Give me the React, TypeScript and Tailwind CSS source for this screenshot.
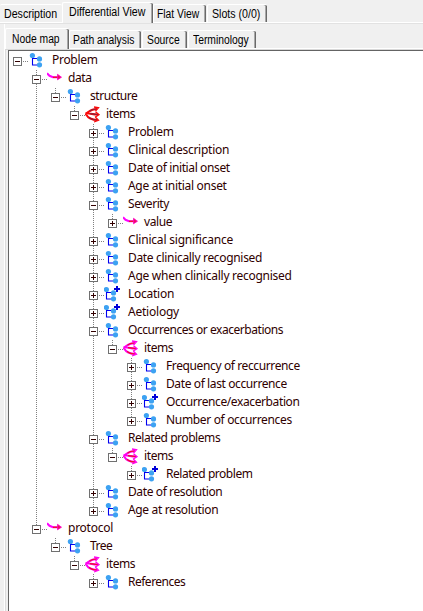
import React from "react";

type Kind = "cluster" | "clusterPlus" | "arrow" | "fan" | "fanRed";
type Row = [level: number, label: string, kind: Kind, open: boolean, tracking: number];

const rows: Row[] = [
  [0, "Problem", "cluster", true, -0.3],
  [1, "data", "arrow", true, -0.4],
  [2, "structure", "cluster", true, -0.45],
  [3, "items", "fanRed", true, -0.4],
  [4, "Problem", "cluster", false, -0.3],
  [4, "Clinical description", "cluster", false, -0.25],
  [4, "Date of initial onset", "cluster", false, -0.38],
  [4, "Age at initial onset", "cluster", false, -0.3],
  [4, "Severity", "cluster", true, -0.45],
  [5, "value", "arrow", false, -0.4],
  [4, "Clinical significance", "cluster", false, -0.2],
  [4, "Date clinically recognised", "cluster", false, -0.32],
  [4, "Age when clinically recognised", "cluster", false, -0.27],
  [4, "Location", "clusterPlus", false, -0.25],
  [4, "Aetiology", "clusterPlus", false, -0.22],
  [4, "Occurrences or exacerbations", "cluster", true, -0.46],
  [5, "items", "fan", true, -0.4],
  [6, "Frequency of reccurrence", "cluster", false, -0.38],
  [6, "Date of last occurrence", "cluster", false, -0.39],
  [6, "Occurrence/exacerbation", "clusterPlus", false, -0.39],
  [6, "Number of occurrences", "cluster", false, -0.33],
  [4, "Related problems", "cluster", true, -0.44],
  [5, "items", "fan", true, -0.4],
  [6, "Related problem", "clusterPlus", false, -0.47],
  [4, "Date of resolution", "cluster", false, -0.39],
  [4, "Age at resolution", "cluster", false, -0.35],
  [1, "protocol", "arrow", true, -0.25],
  [2, "Tree", "cluster", true, -0.5],
  [3, "items", "fan", true, -0.4],
  [4, "References", "cluster", false, -0.5],
];

function continues(index: number, level: number) {
  for (let i = index + 1; i < rows.length; i++) {
    if (rows[i][0] < level) return false;
    if (rows[i][0] === level) return true;
  }
  return false;
}

function Guide({ on }: { on: boolean }) {
  return (
    <svg className="h-[18px] w-[19px] shrink-0" shapeRendering="crispEdges">
      {on && <path d="M8.5 0V18" stroke="#808080" strokeDasharray="1 1" />}
    </svg>
  );
}

function Toggle({ open, up, down }: { open: boolean; up: boolean; down: boolean }) {
  return (
    <svg className="h-[18px] w-[19px] shrink-0" shapeRendering="crispEdges" fill="none">
      {up && <path d="M8.5 0V5" stroke="#808080" strokeDasharray="1 1" />}
      {down && <path d="M8.5 14V18" stroke="#808080" strokeDasharray="1 1" />}
      <path d="M14 9.5H19" stroke="#808080" strokeDasharray="1 1" />
      <rect x="4.5" y="5.5" width="8" height="8" fill="#fff" stroke="#707070" />
      <path d="M6 9.5H11" stroke="#300" />
      {!open && <path d="M8.5 7V12" stroke="#300" />}
    </svg>
  );
}

function Icon({ kind }: { kind: Kind }) {
  if (kind === "arrow") {
    return (
      <svg className="h-[18px] w-[21px] shrink-0" fill="none">
        <path d="M0 3.3L2.5 5.8L6 7.2H12" stroke="#f0f" strokeWidth="2" />
        <path d="M6 7.3H13" stroke="#f01030" strokeWidth="1.4" />
        <path d="M10.5 4.3L14.5 7.2L10.5 9.8Z" fill="#f01060" stroke="#f0c" strokeWidth="0.8" />
      </svg>
    );
  }
  if (kind === "fan" || kind === "fanRed") {
    const outer = kind === "fan" ? "#ff00f0" : "#fa0808";
    const inner = kind === "fan" ? "#f01028" : "#902038";
    return (
      <svg className="h-[18px] w-[21px] shrink-0" fill="none">
        <path
          d="M0.5 7.5C4 7 4 3 12 3M0.5 7.5C4 6.5 6 8.5 13 8.5M0.5 7.5C3 12.5 7 14 12.5 14"
          stroke={outer}
          strokeWidth="2"
        />
        <path d="M4.5 5.2C6.5 3.5 9 3 12 3M5 7.6L13 8.6M4 11.5C6.5 13.6 9 14 12 14" stroke={inner} strokeWidth="1.1" />
        <path d="M9 1L13.5 1.8L10.5 5M10.5 5.8L14 8.6L10 11.2M10.5 11.3L13.5 14.3L9 16" stroke={outer} strokeWidth="1.3" />
      </svg>
    );
  }
  const plus = kind === "clusterPlus";
  return (
    <svg className="h-[18px] w-[24px] shrink-0">
      <g transform={plus ? "translate(-2 0)" : undefined}>
        <path d="M4.5 4V13.5M4 6.5H10M4 13H10" fill="none" stroke="#0000f0" strokeWidth="1.1" />
        <circle cx="4.4" cy="3.5" r="2.6" fill="#3da2f2" />
        <circle cx="11.5" cy="6.9" r="2.6" fill="#3da2f2" />
        <circle cx="11.5" cy="12.8" r="2.6" fill="#3da2f2" />
      </g>
      {plus && <path d="M10 3H16M13 0V6" stroke="#0000d8" strokeWidth="2" />}
    </svg>
  );
}

function Tab({ label, text, className }: { label: string; text: string; className: string }) {
  return (
    <div className={`shrink-0 rounded-t-[2px] border-t border-l border-white whitespace-nowrap ${className}`}>
      <span className={`inline-block origin-left ${text}`}>{label}</span>
    </div>
  );
}

const shade = "shadow-[inset_-1px_0_#696969,inset_-2px_0_#a8a8a8]";
const wide = "scale-x-[0.885]";
const narrow = "scale-x-[0.86]";

export default function App() {
  return (
    <div className="flex h-[611px] w-[423px] flex-col overflow-hidden bg-[#f0f0f0] font-['Liberation_Sans',Arial,sans-serif] text-[12px] leading-[14px] text-black">
      <div className="flex h-[24px] shrink-0 items-end border-b border-[#e2e2e2] shadow-[inset_0_-1px_#fff]">
        <Tab label="Description" text={wide} className="mb-px h-[18px] w-[62px] border-l-0 pt-[2px] pl-[4px]" />
        <Tab label="Differential View" text={wide} className={`h-[21px] w-[91px] bg-[#f0f0f0] pt-[2px] pl-[6px] ${shade}`} />
        <Tab label="Flat View" text={narrow} className={`mb-px h-[18px] w-[53px] pt-[2px] pl-[3px] ${shade}`} />
        <Tab label="Slots (0/0)" text={wide} className={`mb-px ml-px h-[18px] w-[60px] pt-[2px] pl-[4px] ${shade}`} />
      </div>
      <div className="ml-[4px] flex min-h-0 grow flex-col border-l border-white">
        <div className="flex h-[26px] shrink-0 items-end border-b border-[#d8d8d8] shadow-[inset_0_-1px_#fff]">
          <Tab label="Node map" text={narrow} className={`h-[21px] w-[64px] bg-[#f0f0f0] pt-[3px] pl-[6px] ${shade}`} />
          <Tab label="Path analysis" text={narrow} className={`mb-px h-[18px] w-[72px] pt-[2px] pl-[3px] ${shade}`} />
          <Tab label="Source" text={narrow} className={`mb-px ml-px h-[18px] w-[45px] pt-[2px] pl-[4px] ${shade}`} />
          <Tab label="Terminology" text={narrow} className={`mb-px ml-px h-[18px] w-[68px] pt-[2px] pl-[4px] ${shade}`} />
        </div>
        <div className="min-h-0 grow border-l border-[#dcdcdc] pl-[2px]">
          <div className="h-full border-t border-l border-[#646464] bg-white pt-px font-['Noto_Sans',sans-serif] text-[#300000]">
            {rows.map(([level, label, kind, open, tracking], i) => (
              <div key={i} className="flex h-[18px]">
                {Array.from({ length: level }, (_, l) => (
                  <Guide key={l} on={l > 0 && continues(i, l)} />
                ))}
                <Toggle open={open} up={level > 0} down={level > 0 && continues(i, level)} />
                <Icon kind={kind} />
                <span className="h-[18px] leading-[16px] whitespace-nowrap" style={{ letterSpacing: tracking }}>
                  {label}
                </span>
              </div>
            ))}
          </div>
        </div>
      </div>
    </div>
  );
}
